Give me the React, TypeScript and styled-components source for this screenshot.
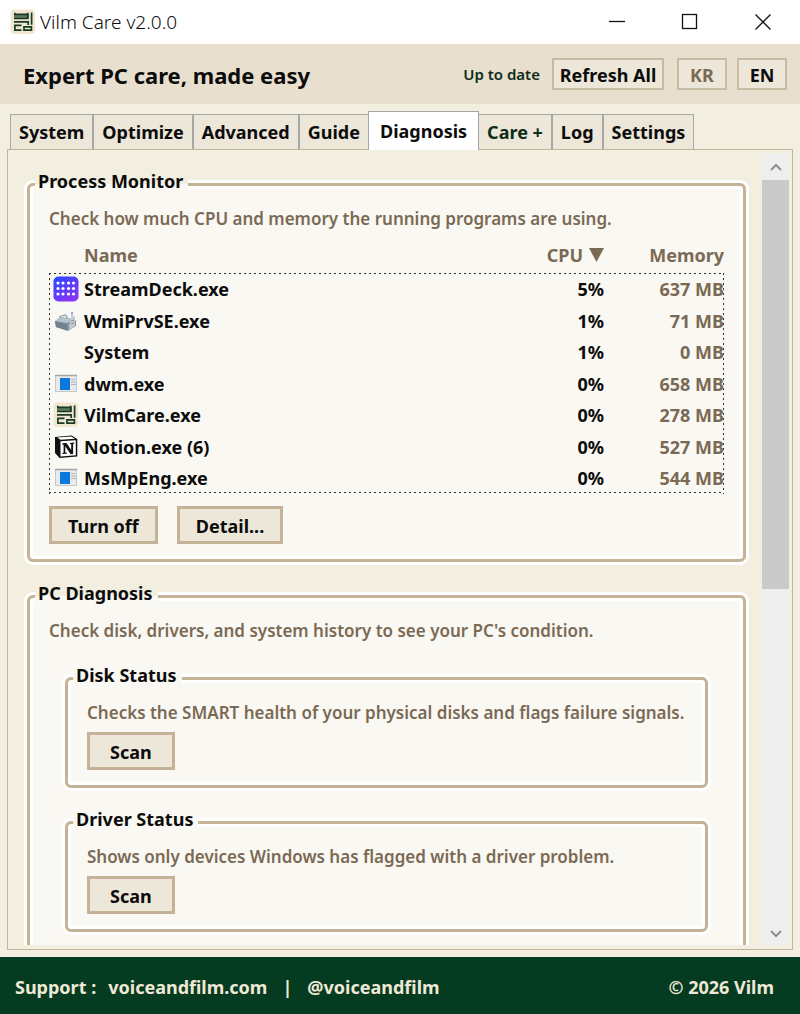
import React from "react";
import styled, { createGlobalStyle, css } from "styled-components";

const color = {
  cream: "#f2eee0",
  sand: "#e8dfcf",
  card: "#faf8f2",
  button: "#ece7d9",
  tan: "#c4b397",
  ink: "#0c0c0c",
  muted: "#7a6a55",
  green: "#053b20",
  darkGreen: "#0d2c1a",
};

const GlobalStyle = createGlobalStyle`
  * { box-sizing: border-box; }
  body {
    margin: 0;
    background: ${color.cream};
    color: ${color.ink};
    font-family: "Noto Sans", "Open Sans", sans-serif;
    font-size: 18px;
    font-weight: 700;
    line-height: 24px;
  }
  button { font: inherit; color: inherit; cursor: pointer; }
`;

const Window = styled.div`
  display: flex;
  flex-direction: column;
  height: 100vh;
`;

const TitleBar = styled.header`
  display: flex;
  align-items: center;
  flex: none;
  height: 44px;
  padding: 0 1px 0 10px;
  background: #fff;
`;

const WindowTitle = styled.span`
  flex: 1;
  padding-left: 4px;
  font-size: 19px;
  font-weight: 300;
`;

const WindowButton = styled.button`
  display: flex;
  align-items: center;
  justify-content: center;
  width: 73px;
  height: 44px;
  padding: 0;
  border: 0;
  background: none;
`;

const Banner = styled.div`
  display: flex;
  align-items: center;
  flex: none;
  height: 60px;
  padding: 0 13px 0 23px;
  background: ${color.sand};
`;

const Slogan = styled.h1`
  flex: 1;
  margin: 0;
  padding-top: 2px;
  font-size: 22px;
  font-weight: 700;
`;

const UpdateState = styled.span`
  margin-right: 12px;
  color: ${color.darkGreen};
  font-size: 15px;
  font-weight: 600;
`;

const BannerButton = styled.button<{ $dim?: boolean; $wide?: boolean }>`
  width: ${(p) => (p.$wide ? 112 : 50)}px;
  height: 32px;
  padding: 2px 0 0;
  border: 2px solid #c6bba3;
  background: ${color.button};
  color: ${(p) => (p.$dim ? color.muted : color.ink)};
  line-height: 26px;
  white-space: nowrap;
`;

const LanguageSwitch = styled.div`
  display: flex;
  gap: 10px;
  margin-left: 13px;
`;

const Body = styled.main`
  display: flex;
  flex-direction: column;
  flex: 1;
  min-height: 0;
  padding: 7px;
`;

const TabList = styled.div`
  display: flex;
  align-items: flex-end;
  padding-left: 3px;
`;

const Tab = styled.button<{ $green?: boolean }>`
  height: 35px;
  padding: 0 8px;
  border: 1px solid #a6a6a6;
  border-bottom: 0;
  background: ${color.button};
  color: ${(p) => (p.$green ? color.darkGreen : color.ink)};
  white-space: nowrap;

  &[aria-selected="true"] {
    height: 39px;
    margin: 0 -1px -1px;
    padding: 0 11px;
    background: #fff;
    z-index: 1;
  }
`;

const Panel = styled.section`
  display: flex;
  flex: 1;
  min-height: 0;
  padding: 4px 3px;
  border: 1px solid ${color.tan};
`;

const Scroller = styled.div`
  display: flex;
  flex-direction: column;
  gap: 22px;
  flex: 1;
  min-width: 0;
  padding: 18px 16px 0;
  overflow-y: auto;
  scrollbar-width: none;
`;

const ScrollBar = styled.div`
  display: flex;
  flex-direction: column;
  flex: none;
  width: 27px;
  background: #eeeeee;
`;

const ScrollTrack = styled.div`
  flex: 1;
`;

const ScrollThumb = styled.div`
  height: 55%;
  background: #cbcaca;
`;

const ScrollArrow = styled.button`
  display: flex;
  align-items: center;
  justify-content: center;
  height: 26px;
  padding: 0;
  border: 0;
  background: none;

  &:last-child { height: 22px; }
`;

const Group = styled.fieldset<{ $nested?: boolean; $open?: boolean }>`
  min-width: 0;
  margin: ${(p) => (p.$nested ? "22px 16px 0" : "0")};
  padding: 10px 19px 15px;
  border: 3px solid ${color.tan};
  border-radius: 6px;
  background: ${color.card};
  box-shadow: 0 0 0 3px #fff, inset 0 0 0 3px #fff;
  ${(p) =>
    p.$open &&
    css`
      flex: 1 0 auto;
      padding-bottom: 48px;
    `}
`;

const GroupTitle = styled.legend<{ $above: string }>`
  height: 24px;
  margin-left: -14px;
  padding: 0 5px 0 3px;
  background: linear-gradient(${(p) => p.$above} 50%, ${color.card} 50%);
  line-height: 18px;
`;

const Description = styled.p`
  margin: 0;
  color: ${color.muted};
  font-size: 17px;
  font-weight: 600;
  line-height: 26px;
`;

const ActionRow = styled.div<{ $tight?: boolean }>`
  display: flex;
  gap: 19px;
  margin-top: ${(p) => (p.$tight ? 6 : 12)}px;
`;

const ActionButton = styled.button`
  height: 38px;
  padding: 2px 16px 0;
  border: 3px solid ${color.tan};
  background: ${color.button};
  line-height: 30px;
`;

const ScanButton = styled(ActionButton)`
  padding: 2px 20px 0;
`;

const ProcessTable = styled.table`
  width: 100%;
  margin-top: 4px;
  border-collapse: collapse;
  table-layout: fixed;
`;

const HeadCell = styled.th<{ $right?: boolean; $width?: number }>`
  width: ${(p) => (p.$width ? `${p.$width}px` : "auto")};
  height: 37px;
  padding: 0;
  color: ${color.muted};
  text-align: ${(p) => (p.$right ? "right" : "left")};
  white-space: nowrap;
`;

const SortArrow = styled.svg`
  margin-left: 6px;
`;

const dotsAcross = "linear-gradient(90deg, #333 2px, transparent 2px)";
const dotsDown = "linear-gradient(#333 2px, transparent 2px)";

const ProcessRows = styled.tbody`
  background:
    ${dotsAcross} left top / 5px 1px repeat-x,
    ${dotsAcross} left bottom 1px / 5px 1px repeat-x,
    ${dotsDown} left top / 1px 5px repeat-y,
    ${dotsDown} right top / 1px 5px repeat-y;
`;

const ProcessRow = styled.tr`
  height: 31px;
  &:nth-child(odd) { height: 32px; }
`;

const Cell = styled.td<{ $muted?: boolean; $right?: boolean }>`
  padding: 0;
  color: ${(p) => (p.$muted ? color.muted : color.ink)};
  text-align: ${(p) => (p.$right ? "right" : "left")};
  white-space: nowrap;
`;

const IconCell = styled(Cell)`
  padding-left: 4px;
  line-height: 0;
`;

const Footer = styled.footer`
  display: flex;
  align-items: center;
  flex: none;
  height: 57px;
  padding: 2px 26px 0 15px;
  background: ${color.green};
  color: #f0e8d6;
`;

const FooterLink = styled.a`
  color: inherit;
  text-decoration: none;
`;

const SupportLabel = styled.span`
  margin-right: 12px;
`;

const Divider = styled.span`
  margin: 0 15px;
`;

const Copyright = styled.span`
  margin-left: auto;
`;

const VilmLogo = () => (
  <svg width="26" height="26" viewBox="0 0 26 26" aria-hidden="true">
    <rect x="0.5" y="0.5" width="24.5" height="24.5" rx="4" fill="#f1e6cf" />
    <path d="M4 5h15v4.500H4z" fill="#5f7a63" />
    <path
      d="M4.800 3.800v2M4 5.400h14.600M4 9.500h14.600M17.700 3.800v6M21.600 3.500v12.200M4 12.900h14.200v3M11.500 16.300H4.900v4.900h6.600M14 17.800h7.400v3.400H14z"
      fill="none"
      stroke="#163a24"
      strokeWidth="1.700"
    />
  </svg>
);

const StreamDeckIcon = () => (
  <svg width="26" height="26" viewBox="0 0 26 26" aria-hidden="true">
    <defs>
      <linearGradient id="deck" x1="0" y1="0" x2="0.7" y2="1">
        <stop offset="0" stopColor="#2448ff" />
        <stop offset="1" stopColor="#8a34f8" />
      </linearGradient>
    </defs>
    <rect x="0.5" y="0.5" width="25" height="25" rx="5" fill="url(#deck)" />
    {[7, 12.5, 18].map((y) =>
      [5, 10, 15.5, 20.5].map((x) => <circle key={`${x}-${y}`} cx={x} cy={y} r="1.600" fill="#fff" />)
    )}
  </svg>
);

const ToolboxIcon = () => (
  <svg width="26" height="26" viewBox="0 0 26 26" aria-hidden="true">
    <path d="M2 13l6-4 13 2 2 2v5l-8 5-12-4z" fill="#84939e" />
    <path d="M2 13l6-4 12 2-6 4z" fill="#b7c3ca" />
    <path d="M2 13.500l12 2.500v6.500L3 19z" fill="#71838f" />
    <path d="M7 10.500V8.500l5-1.500 2 1.500v2" fill="none" stroke="#8f9da6" strokeWidth="1.200" />
    <path d="M17 10l5-2v10l-6 4z" fill="#c3cbd1" />
    <path d="M18 13l3-1M18 16l3-1" stroke="#7f8e99" strokeWidth="1" />
    <path d="M19 9V5" stroke="#8793c8" strokeWidth="1" />
    <circle cx="19" cy="5" r="1.200" fill="#9aa3dc" />
  </svg>
);

const ProgramIcon = () => (
  <svg width="26" height="26" viewBox="0 0 26 26" aria-hidden="true">
    <rect x="2.500" y="4.500" width="21" height="16" fill="#e9eaec" stroke="#c6c9cc" />
    <path d="M2 4.500h22" stroke="#a2a6aa" strokeWidth="1.500" />
    <rect x="7" y="7" width="10" height="12" fill="#0b78dc" />
    <path d="M18 8.500h4M18 11h5M18 13.500h5" stroke="#b2b5b9" strokeWidth="1" />
  </svg>
);

const NotionIcon = () => (
  <svg width="26" height="26" viewBox="0 0 26 26" aria-hidden="true">
    <path d="M2 3L18.500 1.500 24.300 5V22.500L6.500 24 2 19z" fill="#111" />
    <path d="M4.200 3.600L18 2.500 22 4.800 7.500 5.800z" fill="#fff" />
    <path d="M7.500 7.200L22.800 6.200V21.300L7.500 22.500z" fill="#fff" />
    <path
      d="M9.300 9.300l4.200-.3 4.700 7V10.300l-1.400-.3V8.900l4.500-.3v1l-1.200.4v10l-2.500.2-5.300-8v6.300l1.600.3v1l-4.600.3v-1l1.300-.4V10.800l-1.300-.3z"
      fill="#111"
    />
  </svg>
);

const processes = [
  { icon: <StreamDeckIcon />, name: "StreamDeck.exe", cpu: "5%", memory: "637 MB" },
  { icon: <ToolboxIcon />, name: "WmiPrvSE.exe", cpu: "1%", memory: "71 MB" },
  { icon: null, name: "System", cpu: "1%", memory: "0 MB" },
  { icon: <ProgramIcon />, name: "dwm.exe", cpu: "0%", memory: "658 MB" },
  { icon: <VilmLogo />, name: "VilmCare.exe", cpu: "0%", memory: "278 MB" },
  { icon: <NotionIcon />, name: "Notion.exe (6)", cpu: "0%", memory: "527 MB" },
  { icon: <ProgramIcon />, name: "MsMpEng.exe", cpu: "0%", memory: "544 MB" },
];

const tabs = ["System", "Optimize", "Advanced", "Guide", "Diagnosis", "Care +", "Log", "Settings"];

const checks = [
  { title: "Disk Status", text: "Checks the SMART health of your physical disks and flags failure signals." },
  { title: "Driver Status", text: "Shows only devices Windows has flagged with a driver problem." },
];

export default function App() {
  return (
    <Window>
      <GlobalStyle />
      <TitleBar>
        <VilmLogo />
        <WindowTitle>Vilm Care v2.0.0</WindowTitle>
        <WindowButton aria-label="Minimize">
          <svg width="18" height="18" viewBox="0 0 18 18">
            <path d="M1 8.500h16" stroke="#111" strokeWidth="1.300" />
          </svg>
        </WindowButton>
        <WindowButton aria-label="Maximize">
          <svg width="18" height="18" viewBox="0 0 18 18">
            <rect x="1.500" y="1.500" width="14" height="14" fill="none" stroke="#111" strokeWidth="1.300" />
          </svg>
        </WindowButton>
        <WindowButton aria-label="Close">
          <svg width="18" height="18" viewBox="0 0 18 18">
            <path d="M1.500 1.500l15 15M16.500 1.500l-15 15" stroke="#111" strokeWidth="1.300" />
          </svg>
        </WindowButton>
      </TitleBar>

      <Banner>
        <Slogan>Expert PC care, made easy</Slogan>
        <UpdateState>Up to date</UpdateState>
        <BannerButton $wide>Refresh All</BannerButton>
        <LanguageSwitch>
          <BannerButton $dim>KR</BannerButton>
          <BannerButton>EN</BannerButton>
        </LanguageSwitch>
      </Banner>

      <Body>
        <TabList role="tablist">
          {tabs.map((name) => (
            <Tab key={name} role="tab" aria-selected={name === "Diagnosis"} $green={name === "Care +"}>
              {name}
            </Tab>
          ))}
        </TabList>
        <Panel role="tabpanel">
          <Scroller>
            <Group>
              <GroupTitle $above={color.cream}>Process Monitor</GroupTitle>
              <Description>Check how much CPU and memory the running programs are using.</Description>
              <ProcessTable>
                <thead>
                  <tr>
                    <HeadCell $width={35} aria-label="Icon" />
                    <HeadCell>Name</HeadCell>
                    <HeadCell $right $width={120}>
                      CPU
                      <SortArrow width="15" height="14" viewBox="0 0 15 14" aria-hidden="true">
                        <path d="M0 0h15L7.500 14z" fill={color.muted} />
                      </SortArrow>
                    </HeadCell>
                    <HeadCell $right $width={120}>Memory</HeadCell>
                  </tr>
                </thead>
                <ProcessRows>
                  {processes.map((p) => (
                    <ProcessRow key={p.name}>
                      <IconCell>{p.icon}</IconCell>
                      <Cell>{p.name}</Cell>
                      <Cell $right>{p.cpu}</Cell>
                      <Cell $right $muted>{p.memory}</Cell>
                    </ProcessRow>
                  ))}
                </ProcessRows>
              </ProcessTable>
              <ActionRow>
                <ActionButton>Turn off</ActionButton>
                <ActionButton>Detail...</ActionButton>
              </ActionRow>
            </Group>

            <Group $open>
              <GroupTitle $above={color.cream}>PC Diagnosis</GroupTitle>
              <Description>Check disk, drivers, and system history to see your PC's condition.</Description>
              {checks.map((check) => (
                <Group $nested key={check.title}>
                  <GroupTitle $above={color.card}>{check.title}</GroupTitle>
                  <Description>{check.text}</Description>
                  <ActionRow $tight>
                    <ScanButton>Scan</ScanButton>
                  </ActionRow>
                </Group>
              ))}
            </Group>
          </Scroller>
          <ScrollBar>
            <ScrollArrow aria-label="Scroll up">
              <svg width="12" height="8" viewBox="0 0 12 8">
                <path d="M1 7l5-5 5 5" fill="none" stroke="#8f8f8f" strokeWidth="2" />
              </svg>
            </ScrollArrow>
            <ScrollTrack>
              <ScrollThumb />
            </ScrollTrack>
            <ScrollArrow aria-label="Scroll down">
              <svg width="12" height="8" viewBox="0 0 12 8">
                <path d="M1 1l5 5 5-5" fill="none" stroke="#8f8f8f" strokeWidth="2" />
              </svg>
            </ScrollArrow>
          </ScrollBar>
        </Panel>
      </Body>

      <Footer>
        <SupportLabel>Support :</SupportLabel>
        <FooterLink href="#site">voiceandfilm.com</FooterLink>
        <Divider>|</Divider>
        <FooterLink href="#social">@voiceandfilm</FooterLink>
        <Copyright>© 2026 Vilm</Copyright>
      </Footer>
    </Window>
  );
}
